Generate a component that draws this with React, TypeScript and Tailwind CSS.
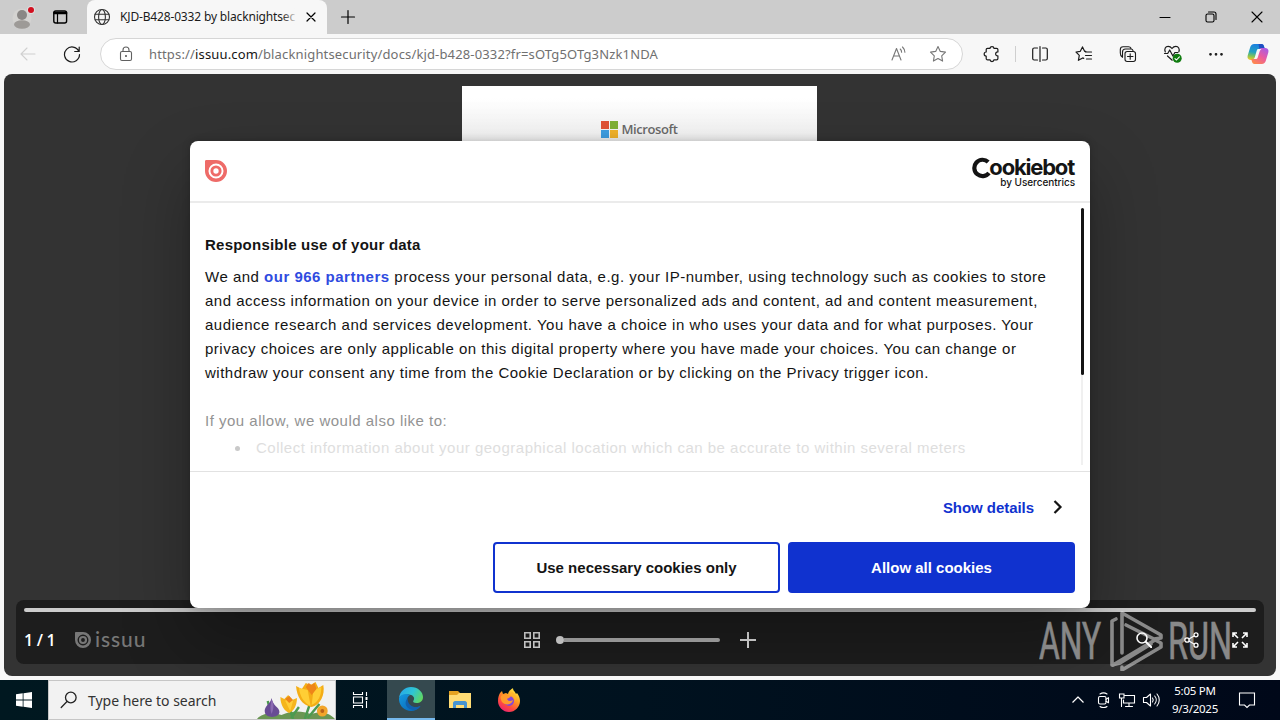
import type { ReactNode } from 'react';

const policyLines = [
  'and access information on your device in order to serve personalized ads and content, ad and content measurement,',
  'audience research and services development. You have a choice in who uses your data and for what purposes. Your',
  'privacy choices are only applicable on this digital property where you have made your choices. You can change or',
  'withdraw your consent any time from the Cookie Declaration or by clicking on the Privacy trigger icon.',
];

type IconProps = {
  children: ReactNode;
  className?: string;
  size?: number;
};

const Icon = ({ children, className = '', size = 18 }: IconProps) => (
  <svg
    width={size}
    height={size}
    viewBox={`0 0 ${size} ${size}`}
    fill="none"
    stroke="currentColor"
    strokeWidth="1.1"
    strokeLinecap="round"
    strokeLinejoin="round"
    className={`shrink-0 ${className}`}
  >
    {children}
  </svg>
);

const STAR = 'M9 1.5l2.3 4.9 5.2.7-3.8 3.7.9 5.3L9 13.5l-4.6 2.6.9-5.3L1.5 7.1l5.2-.7z';

const TitleBar = () => (
  <div className="flex h-[34px] bg-[#cccccc]">
    <div className="flex w-[87px] items-center rounded-br-lg pl-3">
      <svg width="24" height="28" viewBox="0 0 24 28" className="mt-px">
        <circle cx="10" cy="14" r="9.5" fill="#d4d3d1" />
        <circle cx="10" cy="11" r="5" fill="#8a8785" />
        <ellipse cx="10" cy="20.5" rx="8" ry="4.2" fill="#9d9a97" />
        <circle cx="19" cy="6" r="4" fill="#dedede" />
        <circle cx="19" cy="6" r="3" fill="#d20f1f" />
      </svg>
      <Icon size={16} className="ml-4">
        <rect x="1.8" y="2" width="12.8" height="12" rx="2" strokeWidth="1.4" />
        <path d="M2 3.5h12.5M2 4.5h12.5" strokeWidth="1.6" />
        <path d="M5.5 5v9" strokeWidth="1.2" />
      </Icon>
    </div>
    <div className="flex w-60 items-center rounded-t-lg bg-[#f7f7f7] pl-1.5">
      <Icon size={18} className="text-[#333]">
        <circle cx="9" cy="9" r="7.5" />
        <ellipse cx="9" cy="9" rx="3.4" ry="7.5" />
        <path d="M2.2 6.2h13.6M2.2 11.8h13.6" />
      </Icon>
      <div className="relative ml-[9px] w-[178px] whitespace-nowrap font-['Noto_Sans',sans-serif] text-[12px] leading-[18px] tracking-[-0.16px] text-[#1b1b1b]">
        KJD-B428-0332 by blacknightsec
        <div className="absolute inset-y-0 right-0 w-4 bg-gradient-to-r from-transparent to-[#f7f7f7]" />
      </div>
      <Icon size={12} className="ml-[7px] text-black">
        <path d="M2 2l8 8M10 2l-8 8" strokeWidth="1.2" />
      </Icon>
    </div>
    <div className="flex w-11 items-center pl-[13px]">
      <Icon size={16} className="text-black">
        <path d="M8 1.5v13M1.5 8h13" strokeWidth="1.2" />
      </Icon>
    </div>
    <div className="ml-auto flex w-[138px] items-center justify-around text-black">
      <Icon size={12}>
        <path d="M1 6.5h10" />
      </Icon>
      <Icon size={12}>
        <rect x="1" y="3" width="8" height="8" rx="1.6" />
        <path d="M3.5 1H9a2 2 0 0 1 2 2v5.5" />
      </Icon>
      <Icon size={12}>
        <path d="M1 1l10 10M11 1L1 11" />
      </Icon>
    </div>
  </div>
);

const AddressBar = () => (
  <div className="flex h-10 items-center bg-[#f7f7f7]">
    <Icon className="ml-[19px] text-[#d0d0d0]">
      <path d="M16 9H2M8 3L2 9l6 6" />
    </Icon>
    <Icon className="ml-[26px] text-[#1b1b1b]">
      <path d="M15.8 6.3A7.5 7.5 0 1 0 16.5 9.5M16.2 2v4.5h-4.5" strokeWidth="1.2" />
    </Icon>
    <div className="ml-[19px] flex h-8 w-[863px] items-center rounded-full border border-[#d6d6d6] bg-white">
      <Icon size={16} className="ml-[17px] text-[#606060]">
        <rect x="2.5" y="5.5" width="11" height="9" rx="1.5" />
        <path d="M5 5.5V4a3 3 0 0 1 6 0v1.5" />
        <circle cx="8" cy="10" r="0.5" fill="currentColor" />
      </Icon>
      <div className="ml-[15px] whitespace-nowrap font-['Noto_Sans',sans-serif] text-[13px] leading-5 tracking-[0.15px] text-[#707070]">
        https://<span className="text-[#151515]">issuu.com</span>/blacknightsecurity/docs/kjd-b428-0332?fr=sOTg5OTg3Nzk1NDA
      </div>
      <Icon className="ml-auto text-[#777]">
        <path d="M3 15L7.5 3.5l4.5 11.5M4.5 11h6M11.2 4c1 .9 1.4 1.8 1.4 3.2M13.5 2c1.7 1.7 2.4 3.2 2.4 5.2" />
      </Icon>
      <Icon className="ml-[22px] mr-[15px] text-[#777]">
        <path d={STAR} />
      </Icon>
    </div>
    <div className="flex flex-1 items-center text-[#1b1b1b]">
      <Icon className="ml-5">
        <path d="M4.5 3.3h2.6c0-2.3 3.8-2.3 3.8 0h2.7c.8 0 1.3.5 1.3 1.3V7c-3-.4-3 4.2 0 3.8v2.7c0 .8-.5 1.3-1.3 1.3h-2.7c0 2.3-3.8 2.3-3.8 0H4.5c-.8 0-1.3-.5-1.3-1.3V11c-2.7 0-2.7-4 0-4V4.6c0-.8.5-1.3 1.3-1.3z" strokeWidth="1.2" />
      </Icon>
      <div className="ml-[14px] h-4 w-px bg-[#cfcfcf]" />
      <Icon className="ml-[15px]">
        <path d="M6.5 3H3.2C2.3 3 1.7 3.6 1.7 4.5v9c0 .9.6 1.5 1.5 1.5h3.3M11.5 3h3.3c.9 0 1.5.6 1.5 1.5v9c0 .9-.6 1.5-1.5 1.5h-3.3M9 1.5v15" strokeWidth="1.2" />
      </Icon>
      <Icon className="ml-[26px]">
        <path d="M10.8 6.4L9.6 6.3 7.5 1.9 5.3 6.3 1 7l3.3 3.3-.9 5 4.3-2.4 1 .5M10.5 7h6M10.5 10.5h6M11.5 14h5" strokeWidth="1.2" />
      </Icon>
      <Icon className="ml-[26px]">
        <rect x="6" y="6.5" width="10.5" height="10" rx="2.2" />
        <path d="M11.2 8.8v5.5M8.5 11.5H14M3.5 12.3C2 11.5 1.3 10 1.3 8V4.5c0-1.8 1-2.8 2.8-2.8h5.4c1.2 0 2 .5 2.5 1.5M3.5 12.3V7C3.5 5 4.5 4 6.500 4H12c1 0 1.7.7 2 1.5" />
      </Icon>
      <Icon size={20} className="ml-[26px]">
        <path d="M2.3 8C1 5 2.5 2.3 5.1 2.3c1.6 0 2.9.8 3.9 2.2 1-1.4 2.3-2.2 3.900-2.2 2.500 0 4 2.6 3 5.4M4.5 12l4.7 4.2M1.5 9.5h3.2l2-3.500 3.2 6 2-3.500h3" strokeWidth="1.2" />
        <circle cx="14.2" cy="14.3" r="4.5" fill="#107c10" stroke="none" />
        <path d="M12 14.6l1.5 1.4 2.9-3.2" stroke="white" />
      </Icon>
      <Icon className="ml-6">
        <circle cx="3.5" cy="9.3" r="0.8" fill="currentColor" />
        <circle cx="9" cy="9.3" r="0.8" fill="currentColor" />
        <circle cx="14.5" cy="9.3" r="0.8" fill="currentColor" />
      </Icon>
      <CopilotLogo />
    </div>
  </div>
);

const CopilotLogo = () => (
  <svg width="24" height="24" viewBox="0 0 24 24" className="ml-[21px] shrink-0">
    <defs>
      <linearGradient id="copilot-blue" x1="0.4" y1="0" x2="0.2" y2="1">
        <stop offset="0" stopColor="#1b7fe0" />
        <stop offset="0.5" stopColor="#22a3c0" />
        <stop offset="0.75" stopColor="#7cc35a" />
        <stop offset="1" stopColor="#f4c927" />
      </linearGradient>
      <linearGradient id="copilot-pink" x1="0.9" y1="0" x2="0.2" y2="1">
        <stop offset="0" stopColor="#a35bea" />
        <stop offset="0.5" stopColor="#ea5aa0" />
        <stop offset="1" stopColor="#ff8a4b" />
      </linearGradient>
    </defs>
    <path d="M15.5 2c1.3 0 2 .7 2.4 2l.9 3h-2.3c-2 0-3 1-3.5 2.6L11 16c-.4 1.3-1 2-2 2H4.5C2 17.7 1 16 1.7 13.5l2.2-7.3C4.7 3.3 6 2 8.3 2z" fill="url(#copilot-blue)" />
    <path d="M12.5 2h3c1.3 0 2 .7 2.4 2l.9 3h-2.3c-1.2 0-2.2.5-2.8 1.3z" fill="#1f4fc2" />
    <path d="M8.5 22c-1.3 0-2-.7-2.4-2l-.9-3h2.3c2 0 3-1 3.5-2.6L13 8c.4-1.3 1-2 2-2h4.500c2.5.3 3.5 2 2.8 4.500l-2.2 7.3c-.8 2.9-2.1 4.2-4.4 4.2z" fill="url(#copilot-pink)" />
    <path d="M11.8 7h3.7c-.8.5-1.5 1.3-1.8 2.3l-1.900 6c-.3 1-.8 1.6-1.5 1.700H7.600c.6-.4 1-1 1.300-2l1.700-6c.2-.8.6-1.600 1.200-2z" fill="#f7f7f7" />
  </svg>
);

const IssuuMark = ({ size, className }: { size: number; className: string }) => (
  <svg width={size} height={size} viewBox="0 0 24 24" className={className}>
    <path
      fillRule="evenodd"
      fill="currentColor"
      d="M1.5 0H12a12 12 0 1 1-12 12V1.5C0 .6.6 0 1.5 0zM12 3.8a8.2 8.2 0 1 0 0 16.400 8.2 8.2 0 0 0 0-16.400z"
    />
    <circle cx="12" cy="12" r="4.5" fill="none" stroke="currentColor" strokeWidth="3.2" />
  </svg>
);

const CookieDialog = () => (
  <div className="absolute left-[186px] top-[67px] flex h-[467px] w-[900px] flex-col rounded-lg bg-white font-['Liberation_Sans',Arial,sans-serif] text-[15px] text-[#141414] shadow-[0_32px_68px_rgba(0,0,0,0.3),0_0_8px_rgba(0,0,0,0.2)]">
    <div className="flex h-[62px] items-center justify-between border-b-2 border-[#ebebeb] px-[15px]">
      <IssuuMark size={22} className="text-[#ee6b68]" />
      <div className="-mt-0.5 flex flex-col items-end font-['Inter',sans-serif] text-[#141414]">
        <div className="flex h-6 items-center text-[22px] font-bold leading-6 tracking-[-1.2px]">
          <svg width="21" height="22" viewBox="0 0 21 22" className="-mr-[4px] mt-1">
            <path d="M16.2 5A8.2 8.2 0 1 0 17 16" fill="none" stroke="currentColor" strokeWidth="4.2" />
          </svg>
          <span className="mr-px mt-0.5">ookiebot</span>
        </div>
        <div className="h-[9px] text-[10px] font-medium leading-[9px] tracking-[-0.05px]">by Usercentrics</div>
      </div>
    </div>
    <div className="relative h-[269px] overflow-hidden border-b border-[#e2e2e2] px-[15px] pt-[30px] tracking-[0.5px]">
      <h2 className="mb-2 whitespace-nowrap font-bold leading-6 tracking-[0.23px]">Responsible use of your data</h2>
      <div className="whitespace-nowrap leading-6">
        <p>
          We and <span className="font-bold text-[#2f4be0]">our 966 partners</span> process your personal data, e.g. your IP-number, using technology such as cookies to store
        </p>
        {policyLines.map((line) => (
          <p key={line}>{line}</p>
        ))}
      </div>
      <p className="mt-6 leading-6 text-[#939393]">If you allow, we would also like to:</p>
      <div className="mt-[3px] flex items-center leading-6 text-[#dedede]">
        <span className="ml-[30px] mr-4 h-[5px] w-[5px] rounded-full bg-[#c9c9c9]" />
        <span>Collect information about your geographical location which can be accurate to within several meters</span>
      </div>
      <div className="absolute right-[7px] top-[5px] h-[257px] w-0.5 bg-[#f0f0f0]" />
      <div className="absolute right-1.5 top-[5px] h-[167px] w-[3px] rounded-sm bg-[#141414]" />
    </div>
    <div className="flex h-[70px] items-center justify-end pr-[26px]">
      <span className="pt-0.5 font-bold leading-6 tracking-[-0.05px] text-[#1032cf]">Show details</span>
      <svg width="12" height="16" viewBox="0 0 12 16" className="ml-[18px]">
        <path d="M2.5 2L8.5 8l-6 6" fill="none" stroke="currentColor" strokeWidth="2.2" />
      </svg>
    </div>
    <div className="flex justify-end gap-2 px-[15px]">
      <button className="h-[51px] w-[287px] rounded border-2 border-[#1032cf] pt-0.5 font-bold">Use necessary cookies only</button>
      <button className="h-[51px] w-[287px] rounded bg-[#1032cf] pt-0.5 font-bold text-white">Allow all cookies</button>
    </div>
  </div>
);

const AnyRunWatermark = () => (
  <svg width="200" height="64" viewBox="0 0 200 64" className="absolute bottom-[5px] right-[37px] opacity-50">
    <g fill="#f5f5f5" stroke="#f5f5f5" strokeWidth="0.6" fontFamily="Roboto, sans-serif" fontSize="52">
      <text x="0" y="52" textLength="62" lengthAdjust="spacingAndGlyphs">ANY</text>
      <text x="129" y="52" textLength="64" lengthAdjust="spacingAndGlyphs">RUN</text>
    </g>
    <g fill="none" stroke="#f5f5f5" strokeWidth="3.6" strokeLinecap="round" strokeLinejoin="round">
      <path d="M77 12l-4 2v44l8-2 31-19" />
      <path d="M83 46V6l39 22v3l-7 1L87 18" />
      <path d="M83 60v3l39-23v-4l-6-3L74 58" />
    </g>
  </svg>
);

const ReaderControls = () => (
  <div className="absolute bottom-3 left-3 right-3 h-16 rounded-lg bg-[#1d1d1d] px-2 pt-2 text-[#e2e2e2]">
    <div className="h-1 rounded-full bg-[#cccccc]" />
    <div className="flex h-14 items-center">
      <div className="w-[51px] whitespace-nowrap font-['Open_Sans',sans-serif] text-base font-semibold leading-5 tracking-[-0.3px] text-white">1 / 1</div>
      <div className="flex w-[449px] items-center text-[#777]">
        <IssuuMark size={16} className="" />
        <span className="-mt-0.5 ml-1 font-['Lato',sans-serif] text-[21px] font-medium leading-5 tracking-[0.9px]">issuu</span>
      </div>
      <Icon size={16}>
        <path d="M.8.8h5.4v5.4H.8zM9.8.8h5.4v5.4H9.8zM.8 9.8h5.4v5.4H.8zM9.8 9.8h5.4v5.4H9.8z" strokeWidth="1.6" strokeLinejoin="miter" />
      </Icon>
      <div className="ml-4 flex w-[164px] items-center">
        <div className="h-2 w-2 rounded-full bg-[#dfdfdf]" />
        <div className="h-1 flex-1 rounded-r-full bg-[#b0b0b0]" />
      </div>
      <Icon size={16} className="ml-5">
        <path d="M8 0v16M0 8h16" strokeWidth="2" strokeLinecap="butt" />
      </Icon>
      <div className="ml-auto mr-2 flex items-center gap-8 text-white">
        <Icon size={16}>
          <circle cx="6" cy="6" r="5" strokeWidth="1.6" />
          <path d="M10 10l5.5 5.5" strokeWidth="2" />
        </Icon>
        <Icon size={16}>
          <circle cx="3" cy="8" r="2.2" strokeWidth="1.3" />
          <circle cx="12" cy="2.8" r="2" strokeWidth="1.3" />
          <circle cx="12" cy="13.2" r="2" strokeWidth="1.3" />
          <path d="M5 7l5-3M5 9l5 3" strokeWidth="1.3" />
        </Icon>
        <Icon size={16}>
          <path d="M1 5V1h4M11 1h4v4M15 11v4h-4M5 15H1v-4M1 1l5 5M15 1l-5 5M15 15l-5-5M1 15l5-5" strokeWidth="1.6" strokeLinecap="butt" strokeLinejoin="miter" />
        </Icon>
      </div>
    </div>
  </div>
);

const Reader = () => (
  <div className="relative mx-1 h-[602px] overflow-hidden rounded-lg bg-[#333333]">
    <div className="ml-[458px] flex h-[72px] w-[355px] flex-col pt-3">
      <div className="flex h-[60px] items-end justify-center bg-gradient-to-b from-white from-20% to-[#f0f0f0] pb-2">
        <div className="grid grid-cols-2 gap-px">
          <div className="h-2 w-2 bg-[#e25336]" />
          <div className="h-2 w-2 bg-[#7fb236]" />
          <div className="h-2 w-2 bg-[#3f9ee2]" />
          <div className="h-2 w-2 bg-[#f2b32c]" />
        </div>
        <span className="ml-[3px] font-['Open_Sans',sans-serif] text-[13px] font-semibold leading-[17px] tracking-[-0.4px] text-[#6a6a6a]">Microsoft</span>
      </div>
    </div>
    <ReaderControls />
    <CookieDialog />
    <AnyRunWatermark />
  </div>
);

const Crocuses = () => (
  <svg width="78" height="38" viewBox="0 0 80 38" preserveAspectRatio="none" className="ml-auto">
    <path d="M0 38c5-6 16-7 25-4 11-5 22-4 30-1 9-3 19-2 25 5z" fill="#6a9653" />
    <path d="M15 35L11 20M37 38l-6-17M49 38l7-20M52 37l12-14M35 37l8-11" fill="none" stroke="#4c9a50" strokeWidth="2.5" />
    <path d="M15 17c-1 6-8 8-7 14 1 7 15 6 15 0 0-5-7-6-8-14z" fill="#684b94" />
    <path d="M15 18c-1 6-2 9 0 15 2-5 3-9 0-15z" fill="#8a69b2" />
    <path d="M24 16l4 2 4-4 4 5 5-2c0 7-3 13-8 15-5-2-9-8-9-16z" fill="#f5b51c" />
    <path d="M29 20l4-5 4 5-3 10z" fill="#ffce38" />
    <path d="M29 18l4-3 4 4-4 3z" fill="#ec8419" />
    <path d="M40 5l6 3 4-6 5 2 5-3 3 6 5-3c2 10-3 20-12 22-10-2-15-10-16-21z" fill="#f4ad16" />
    <path d="M43 7l9 2 3 16c-7-3-11-10-12-18zM66 6l-8 3-2 15c7-3 10-9 10-18z" fill="#ffce35" />
    <path d="M50 6l3-4 3 2 3-2 2 6-5 6z" fill="#ee8518" />
    <circle cx="67" cy="30" r="5.5" fill="#f2a52b" />
    <circle cx="67" cy="30" r="2" fill="#ba621b" />
  </svg>
);

const EdgeLogo = () => (
  <svg width="24" height="24" viewBox="0 0 24 24">
    <defs>
      <linearGradient id="edge-top" x1="0" y1="0.3" x2="1" y2="0.7">
        <stop offset="0" stopColor="#28a7e8" />
        <stop offset="0.5" stopColor="#2ec5d5" />
        <stop offset="1" stopColor="#63d85b" />
      </linearGradient>
      <linearGradient id="edge-low" x1="0" y1="0" x2="1" y2="1">
        <stop offset="0" stopColor="#1599df" />
        <stop offset="1" stopColor="#0760b4" />
      </linearGradient>
    </defs>
    <path d="M0 11C1 4 6 0 12 0c7 0 12 5 12 10 0 4-3 6-6.5 6-3 0-4-1-3-2.5 2-3-1-6-5-6-4 0-8 1-9.5 3.5z" fill="url(#edge-top)" />
    <path d="M0 11c2-4 7-5 11-3-2 1-3 3-3 5 0 6 7 9 13.5 6C19 22.5 16 24 12 24 5 24-.6 18 0 11z" fill="url(#edge-low)" />
    <path d="M8.5 11c-5 7 1 12 7 12 3-1 5-2 6-4-6 3-13 0-13-8z" fill="#1160ae" />
  </svg>
);

const FirefoxLogo = () => (
  <svg width="24" height="24" viewBox="0 0 24 24">
    <defs>
      <linearGradient id="fox" x1="0.8" y1="0" x2="0.2" y2="1">
        <stop offset="0" stopColor="#fff044" />
        <stop offset="0.4" stopColor="#ff9a22" />
        <stop offset="0.7" stopColor="#ff4b3e" />
        <stop offset="1" stopColor="#e91d79" />
      </linearGradient>
    </defs>
    <path d="M3 5l2-2 1 3 3-1 2 1c1-4 4-5 5-6 0 3 2 3 3 6l1-1c2 3 3 5 3 8 0 6-5 11-11 11S1 19 1 13c0-4 1-6 2-8z" fill="url(#fox)" />
    <circle cx="12" cy="13" r="5" fill="#8446d9" />
    <path d="M4 8c3-2 5-1 7 0h3c-1 2-3 2-4 3 1 2 3 3 6 1-1 5-8 6-11 2-1-2-2-4-1-6z" fill="#ff9b2c" />
    <path d="M13 7c3 0 5 3 5 6 2-3 0-7-3-9-1 1-2 2-2 3z" fill="#ffb52c" />
  </svg>
);

const Taskbar = () => (
  <div className="mt-1 flex h-10 bg-gradient-to-r from-[#001820] via-[#00121f] to-[#000819] text-white">
    <div className="flex w-12 items-center justify-center">
      <svg width="16" height="16" viewBox="0 0 16 16" fill="white">
        <path d="M0 2.3L6.7 1.3v6.3H0zM7.5 1.2L16 0v7.6H7.5zM0 8.4h6.7v6.4L0 13.8zM7.5 8.4H16V16l-8.5-1.2z" />
      </svg>
    </div>
    <div className="flex w-72 items-center border border-[#c6c6c6] bg-[#f2f2f2] pl-[11px] text-[#222]">
      <Icon size={18}>
        <circle cx="10.8" cy="6.5" r="5.3" strokeWidth="1.3" />
        <path d="M7 10.5L1.2 16.5" strokeWidth="1.3" />
      </Icon>
      <span className="ml-2.5 whitespace-nowrap pt-px font-['Noto_Sans',sans-serif] text-[14px] leading-5 tracking-[-0.03px] text-[#333]">Type here to search</span>
      <Crocuses />
    </div>
    <div className="flex w-[51px] items-center justify-center pr-0.5">
      <Icon size={18}>
        <path d="M1.5 1v2.5h9V1M1.5 17v-2.5h9V17M1.5 6h9v6h-9zM14.5 1v4M14.5 10v7" strokeLinecap="butt" strokeLinejoin="miter" />
        <path d="M13.5 6h2v3h-2z" fill="white" stroke="none" />
      </Icon>
    </div>
    <div className="flex w-12 items-center justify-center border-b-2 border-[#76b9ed] bg-[#35494f]">
      <EdgeLogo />
    </div>
    <div className="flex w-[50px] items-center justify-center">
      <svg width="22" height="20" viewBox="0 0 22 20">
        <path d="M0 1h9l2 2h11v3H0z" fill="#e5a321" />
        <path d="M0 5h8l2-2h12v15H0z" fill="#ffdc74" />
        <path d="M4 18v-5c0-1 1-2 2-2h10c1 0 2 1 2 2v5h-3v-3H7v3z" fill="#4694d1" />
      </svg>
    </div>
    <div className="flex w-12 items-center justify-center">
      <FirefoxLogo />
    </div>
    <div className="ml-auto flex items-center font-['Noto_Sans',sans-serif]">
      <Icon size={14}>
        <path d="M1.5 9.5L7 4l5.5 5.5" strokeLinecap="butt" strokeWidth="1.2" />
      </Icon>
      <Icon size={16} className="ml-[11px]">
        <rect x="2.5" y="4.5" width="7.5" height="7.5" rx="1.5" />
        <path d="M10 7.2l2.5-1.5v5L10 9.2M4 2c2-1.3 5-1.3 7 0M4 14.5c2 1.3 5 1.3 7 0" />
      </Icon>
      <Icon size={18} className="ml-[6px]">
        <path d="M7 4.5h9.5v7.5H5.5V9M11 12v3M7.5 15.5h7M1.5 3h4.5v4H1.5zM3.5 7v8.5" strokeLinejoin="miter" />
      </Icon>
      <Icon size={18} className="ml-1.5">
        <path d="M1.5 6.5h3L8.5 3v12l-4-3.5h-3zM10.5 7c.9 1.2.9 2.8 0 4M12.7 5c2 2.3 2 5.7 0 8M15 3c3 3.5 3 8.5 0 12" />
      </Icon>
      <div className="ml-1 w-[62px] text-center text-[11.5px] leading-[18px] tracking-[-0.25px]">
        <div>5:05 PM</div>
        <div>9/3/2025</div>
      </div>
      <Icon size={18} className="ml-3 mr-6">
        <path d="M1.5 2h15v12h-5L9 16.5 6.5 14h-5z" strokeLinejoin="miter" />
      </Icon>
    </div>
  </div>
);

const App = () => (
  <div className="h-[720px] w-[1280px] overflow-hidden bg-[#f7f7f7]">
    <TitleBar />
    <AddressBar />
    <Reader />
    <Taskbar />
  </div>
);

export default App;
